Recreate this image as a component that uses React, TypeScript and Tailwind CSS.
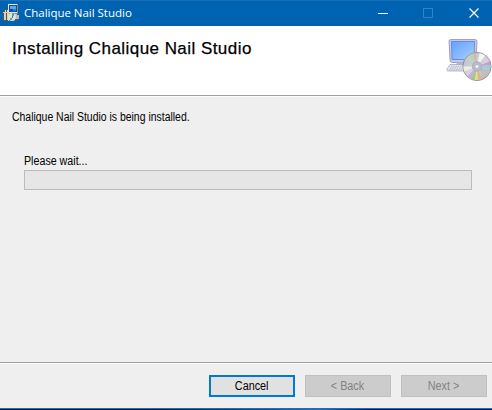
import type { ReactNode } from "react";

function InstallerGlyph() {
  return (
    <svg width="16" height="18" viewBox="0 0 16 18" className="mb-[2px] block shrink-0" shapeRendering="crispEdges">
      <path d="M5 0h10v9H5z" fill="#e4e6e4" />
      <path d="M6 1h8v7H6z" fill="#0c4dab" />
      <path d="M7 2h6v3H7z" fill="#5ba4ee" />
      <path d="M10 5h3v2h-3z" fill="#2d78ce" />
      <path d="M14 0h1v9h-1zM5 9h10v1H5z" fill="#8b8a83" />
      <path d="M8 10h6v1h2v4h-5v-3H8z" fill="#b9bcb4" />
      <path d="M1 6h4v2H1zM0 8h6v9H0z" fill="#d8d0b8" />
      <path d="M1 5h1v3H1zM3 5h1v3H3zM0 9h1v8H0zM3 9h1v8H3zM1 16h4v1H1z" fill="#5b564c" />
      <circle cx="9" cy="13" r="4" fill="#d7e4e3" shapeRendering="auto" />
      <path d="M9 9h2v3H9zM7 14h2v2H7z" fill="#50a88e" />
      <path d="M9 12h1v2H9z" fill="#667" />
      <path d="M12 15h3v1h-3z" fill="#6b654f" />
    </svg>
  );
}

function ComputerDisc() {
  return (
    <svg width="46" height="46" viewBox="0 0 46 46" className="block shrink-0">
      <defs>
        <linearGradient id="screen" x1="0" y1="0" x2="1" y2="1">
          <stop offset="0" stopColor="#63a3ff" />
          <stop offset=".55" stopColor="#88baff" />
          <stop offset="1" stopColor="#b3d5ff" />
        </linearGradient>
        <linearGradient id="disc" x1="0" y1="0" x2="1" y2="1">
          <stop offset="0" stopColor="#b6b6bb" />
          <stop offset=".5" stopColor="#d8d8dc" />
          <stop offset="1" stopColor="#a9a9af" />
        </linearGradient>
        <clipPath id="discClip">
          <circle cx="31" cy="28" r="13.6" />
        </clipPath>
      </defs>
      <path d="M3 3Q3 1.5 5 1.5H29Q31 1.5 31 3.5L30 23Q30 24.5 28 24.5H6Q4 24.5 4 22Z" fill="#c5c8e6" stroke="#8d92c4" strokeWidth=".8" />
      <path d="M5.5 3.5H28.5L28 21.5H6Z" fill="url(#screen)" stroke="#5a80d4" strokeWidth=".8" />
      <path d="M11 24.5H23L24 27H10Z" fill="#b1b5d2" />
      <path d="M4 26.5H27L30 33H1.5Q.5 33 1 31Z" fill="#e9eaf2" stroke="#a5a9c4" strokeWidth=".8" />
      <path d="M5 28.2H27M4 30H27M3 31.8H27" stroke="#9298b6" strokeWidth=".8" strokeDasharray="1.3 1" />
      <g transform="translate(0 .5)">
        <circle cx="31" cy="28" r="14.1" fill="url(#disc)" stroke="#8d8e91" strokeWidth=".9" />
        <g clipPath="url(#discClip)">
          <path d="M31 28L15 20L21 13Z" fill="#cacbd0" />
          <path d="M31 28L21 13L26 11Z" fill="#b0dc9c" />
          <path d="M31 28L26 11L30 12Z" fill="#dfa9ca" />
          <path d="M31 28L34 12L41 15Z" fill="#f5f5f2" />
          <path d="M31 28L41 15L46 21Z" fill="#d1d1d8" />
          <path d="M31 28L46 22V26Z" fill="#d096e0" />
          <path d="M31 28L46 26V31Z" fill="#96d4d2" />
          <path d="M31 28L46 33L40 41Z" fill="#bfbfc2" />
          <path d="M31 28L37 44H32Z" fill="#e8b08a" />
          <path d="M31 28L32 44H28Z" fill="#e3df82" />
          <path d="M31 28L28 44H23Z" fill="#90d190" />
          <path d="M31 28L23 44L19 40Z" fill="#cfa9da" />
          <path d="M31 28L16 34V28Z" fill="#ededee" />
        </g>
        <circle cx="31" cy="28" r="4.7" fill="#b9bdca" stroke="#a2a7b7" strokeWidth=".8" />
        <circle cx="31" cy="28" r="2.1" fill="#f2f3f6" stroke="#a5aabc" strokeWidth=".7" />
      </g>
    </svg>
  );
}

function DisabledButton({ children }: { children: ReactNode }) {
  return (
    <button disabled className="flex h-[22px] w-[86px] items-center justify-center border border-[#bfbfbf] bg-[#cccccc] text-[#838383]">
      <span className="inline-block scale-x-[0.9]">{children}</span>
    </button>
  );
}

export default function App() {
  return (
    <div className="flex h-[410px] w-[492px] flex-col overflow-hidden bg-[#efefef] font-['Liberation_Sans',Arial,sans-serif] text-[12px] leading-[14px] text-black">
      <header className="flex h-[26px] shrink-0 items-center border-t border-[#1a70b5] bg-[#0063b1] pl-[3px] text-white">
        <InstallerGlyph />
        <span className="mb-[2px] ml-[5px] font-['Open_Sans','Noto_Sans',sans-serif] text-[11.5px] leading-4 tracking-[-0.02px]">Chalique Nail Studio</span>
        <svg width="114" height="24" viewBox="0 0 114 24" className="mb-[2px] ml-auto" fill="none">
          <path d="M0 12.5H10" stroke="white" />
          <path d="M45.5 7.5h9v9h-9z" stroke="#3483c4" />
          <path d="M91.5 7.5l9 9m0-9l-9 9" stroke="white" strokeWidth="1.2" />
        </svg>
      </header>

      <section className="flex h-[69px] shrink-0 justify-between bg-white pl-[12px]">
        <h1 className="pt-[13px] text-[17px] leading-5 tracking-[0.45px] [-webkit-text-stroke:0.25px_black]">Installing Chalique Nail Studio</h1>
        <div className="pt-3">
          <ComputerDisc />
        </div>
      </section>
      <div className="h-[2px] shrink-0 border-t border-[#a0a0a0] bg-white" />

      <main className="flex flex-1 flex-col">
        <p className="mt-[13px] ml-[12px] origin-left scale-x-[0.87]">Chalique Nail Studio is being installed.</p>
        <p className="mt-[30px] ml-[24px] origin-left scale-x-[0.89]">Please wait...</p>
        <div className="mt-[2px] ml-[24px] h-[20px] w-[448px] border border-[#bcbcbc] bg-[#e6e6e6]" />
      </main>

      <footer className="flex h-[46px] shrink-0 flex-col">
        <div className="h-[2px] shrink-0 border-t border-[#a0a0a0] bg-white" />
        <div className="flex justify-end gap-[10px] pt-[11px] pr-[5px]">
          <button className="flex h-[22px] w-[86px] items-center justify-center border-2 border-[#0078d7] bg-[#e1e1e1]">
            <span className="inline-block scale-x-[0.9]">Cancel</span>
          </button>
          <DisabledButton>&lt; Back</DisabledButton>
          <DisabledButton>Next &gt;</DisabledButton>
        </div>
      </footer>
      <div className="h-[2px] shrink-0 border-t border-[#1173bb] bg-linear-to-r from-[#071025] from-30% via-[#3b62b4] via-65% to-[#07104a] to-75%" />
    </div>
  );
}
